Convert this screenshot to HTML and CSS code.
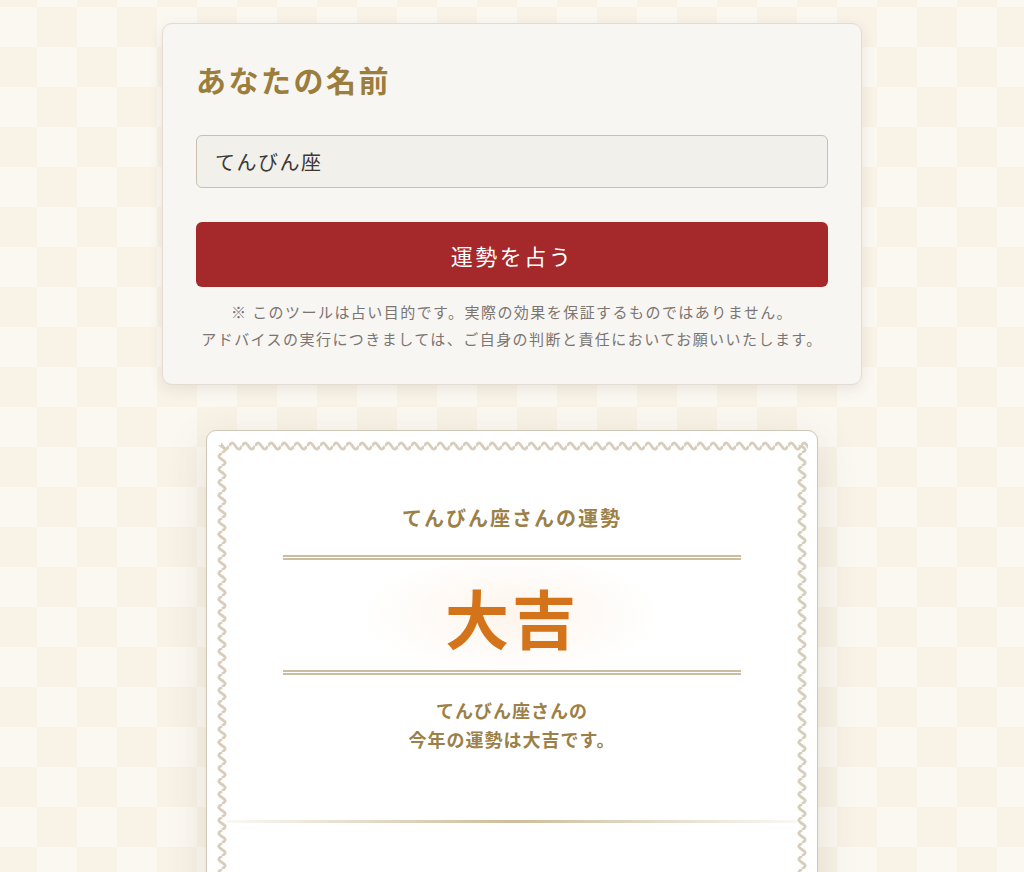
FILE: index.html
```html
<!DOCTYPE html>
<html lang="ja">
<head>
  <meta charset="UTF-8">
  <meta name="viewport" content="width=device-width, initial-scale=1.0">
  <title>運勢占い</title>
  <link rel="stylesheet" href="styles.css">
</head>
<body>
  <div class="form-card">
    <h2 class="form-title">あなたの名前</h2>
    <input class="name-input" type="text" value="てんびん座">
    <button class="fortune-btn">運勢を占う</button>
    <p class="notice">※ このツールは占い目的です。実際の効果を保証するものではありません。<br>アドバイスの実行につきましては、ご自身の判断と責任においてお願いいたします。</p>
  </div>

  <div class="result-card">
    <!-- wavy stamp frame -->
    <svg class="wave-frame" xmlns="http://www.w3.org/2000/svg">
      <defs>
        <pattern id="wave-h" width="13" height="12" patternUnits="userSpaceOnUse">
          <path d="M0 6 C1.1 4.3 2.1 2.8 3.25 2.8 C4.4 2.8 5.4 4.3 6.5 6 C7.6 7.7 8.6 9.2 9.75 9.2 C10.9 9.2 11.9 7.7 13 6" fill="none" stroke="#d7cdba" stroke-width="2.8"/>
        </pattern>
        <pattern id="wave-v" width="12" height="13" patternUnits="userSpaceOnUse">
          <path d="M6 0 C4.3 1.1 2.8 2.1 2.8 3.25 C2.8 4.4 4.3 5.4 6 6.5 C7.7 7.6 9.2 8.6 9.2 9.75 C9.2 10.9 7.7 11.9 6 13" fill="none" stroke="#d7cdba" stroke-width="2.8"/>
        </pattern>
      </defs>
      <rect x="5" y="0" width="100%" height="12" fill="url(#wave-h)"/>
      <rect x="0" y="5" width="12" height="100%" fill="url(#wave-v)"/>
      <svg x="100%" y="0" width="12" height="100%" overflow="visible">
        <rect x="-12" y="5" width="12" height="100%" fill="url(#wave-v)"/>
      </svg>
    </svg>

    <div class="result-body">
      <h3 class="result-head">てんびん座さんの運勢</h3>
      <div class="double-line"></div>
      <div class="fortune">大吉</div>
      <div class="double-line"></div>
      <p class="result-text">てんびん座さんの<br>今年の運勢は大吉です。</p>
      <div class="fade-line"></div>
      <div class="more"></div>
    </div>
  </div>
</body>
</html>
```

FILE: styles.css
```css
body, html {
  margin: 0;
  padding: 0;
}

body {
  font-family: "Noto Sans CJK JP", "Noto Sans", sans-serif;
  background: repeating-conic-gradient(#f8f2e7 0 25%, #fbf8f2 0 50%) -3px 7px / 80px 80px;
  background-color: #fbf8f2;
  padding-top: 23px;
  min-height: 100vh;
  box-sizing: border-box;
}

.form-card {
  width: 700px;
  margin: 0 auto;
  box-sizing: border-box;
  padding: 33px 33px 32px;
  background-color: #f8f6f3;
  border: 1px solid #e2dcd2;
  border-radius: 10px;
  box-shadow: 0 4px 14px rgba(90, 70, 40, 0.1);
}

.form-title {
  margin: 0;
  font-size: 30px;
  line-height: 44px;
  font-weight: 700;
  color: #9b7d3c;
  letter-spacing: 2.5px;
}

.name-input {
  display: block;
  width: 100%;
  box-sizing: border-box;
  height: 53px;
  margin-top: 34px;
  padding: 0 18px;
  font-family: inherit;
  font-size: 20px;
  letter-spacing: 1.5px;
  color: #3a3835;
  background-color: #f2f0eb;
  border: 1px solid #c9c0b2;
  border-radius: 6px;
  outline: none;
}

.fortune-btn {
  display: block;
  width: 100%;
  height: 65px;
  margin-top: 34px;
  font-family: inherit;
  font-size: 22px;
  letter-spacing: 2.5px;
  color: #fff;
  background-color: #a5282a;
  border: none;
  border-radius: 6px;
  cursor: pointer;
}

.notice {
  margin: 11px 0 0;
  font-size: 15px;
  line-height: 27px;
  letter-spacing: 1.45px;
  text-align: center;
  color: #7a7570;
}

.result-card {
  position: relative;
  width: 612px;
  margin: 45px auto 0;
  box-sizing: border-box;
  background-color: #fff;
  border: 1px solid #cfc7b7;
  border-radius: 10px;
  box-shadow: 0 12px 40px rgba(120, 100, 60, 0.16);
}

.wave-frame {
  position: absolute;
  top: 9px;
  left: 9px;
  width: calc(100% - 18px);
  height: calc(100% - 9px);
  pointer-events: none;
}

.result-body {
  padding: 70px 0 0;
  text-align: center;
}

.result-head {
  margin: 0;
  font-size: 20px;
  line-height: 34px;
  font-weight: 700;
  letter-spacing: 2px;
  color: #9b8047;
}

.double-line {
  width: 75%;
  margin: 20px auto 0;
  border-top: 5px double #cbbd9f;
}

.fortune {
  padding: 12px 0 10px;
  font-size: 64px;
  line-height: 88px;
  font-weight: 700;
  letter-spacing: 3px;
  color: #d4741a;
  background: radial-gradient(ellipse 150px 60px at center, rgba(250, 220, 190, 0.3), rgba(255, 255, 255, 0) 100%);
}

.fortune + .double-line {
  margin-top: 0;
}

.result-text {
  margin: 21px 0 0;
  font-size: 18px;
  line-height: 29px;
  font-weight: 700;
  letter-spacing: 1px;
  color: #9b8047;
}

.fade-line {
  height: 3px;
  margin: 66px 20px 0;
  background: linear-gradient(90deg, rgba(205, 189, 154, 0.1), #cdbd9a 50%, rgba(205, 189, 154, 0.1));
}

.more {
  height: 140px;
}
```
